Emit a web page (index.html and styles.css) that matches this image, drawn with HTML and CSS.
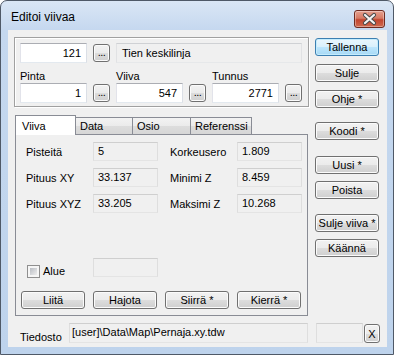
FILE: index.html
```html
<!DOCTYPE html>
<html lang="fi">
<head>
  <meta charset="UTF-8">
  <title>Editoi viivaa</title>
  <link rel="stylesheet" href="styles.css">
</head>
<body>

<div class="window">
  <div class="titlebar">
    <span class="title">Editoi viivaa</span>
    <span class="close">
      <svg width="31" height="18" viewBox="0 0 31 18">
        <path d="M11 5 L20 13 M20 5 L11 13" stroke="#4a4a4a" stroke-width="4.2" stroke-linecap="round"/>
        <path d="M11 5 L20 13 M20 5 L11 13" stroke="#f4f4f4" stroke-width="2.2" stroke-linecap="round"/>
      </svg>
    </span>
  </div>

  <div class="client">
    <div class="upper">
      <div class="main">

        <div class="group">
          <div class="edit num">121</div>
          <div class="btn dots">...</div>
          <div class="edit ro span4">Tien keskilinja</div>

          <div class="cap">Pinta</div>
          <div class="cap col3">Viiva</div>
          <div class="cap col5">Tunnus</div>

          <div class="edit num r3">1</div>
          <div class="btn dots r3">...</div>
          <div class="edit num r3">547</div>
          <div class="btn dots r3">...</div>
          <div class="edit num r3">2771</div>
          <div class="btn dots r3">...</div>
        </div>

        <div class="tabs">
          <div class="tab active">Viiva</div>
          <div class="tab w-data">Data</div>
          <div class="tab w-osio">Osio</div>
          <div class="tab w-ref">Referenssi</div>
        </div>

        <div class="panel">
          <div class="stats">
            <div class="lbl">Pisteitä</div>
            <div class="val">5</div>
            <div class="lbl col4">Korkeusero</div>
            <div class="val">1.809</div>

            <div class="lbl">Pituus XY</div>
            <div class="val">33.137</div>
            <div class="lbl col4">Minimi Z</div>
            <div class="val">8.459</div>

            <div class="lbl">Pituus XYZ</div>
            <div class="val">33.205</div>
            <div class="lbl col4">Maksimi Z</div>
            <div class="val">10.268</div>
          </div>

          <div class="alue">
            <div class="checkrow">
              <span class="check"></span>
              <span class="checklabel">Alue</span>
            </div>
            <div class="val"></div>
          </div>

          <div class="actions">
            <div class="btn act">Liitä</div>
            <div class="btn act">Hajota</div>
            <div class="btn act">Siirrä *</div>
            <div class="btn act">Kierrä *</div>
          </div>
        </div>

      </div>

      <div class="side">
        <div class="btn side-btn default">Tallenna</div>
        <div class="btn side-btn m8">Sulje</div>
        <div class="btn side-btn m8">Ohje *</div>
        <div class="btn side-btn m14">Koodi *</div>
        <div class="btn side-btn m16">Uusi *</div>
        <div class="btn side-btn m7">Poista</div>
        <div class="btn side-btn m15">Sulje viiva *</div>
        <div class="btn side-btn m7">Käännä</div>
      </div>
    </div>

    <div class="filerow">
      <div class="filelabel">Tiedosto</div>
      <div class="val file">[user]\Data\Map\Pernaja.xy.tdw</div>
      <div class="val small"></div>
      <div class="btn xbtn">X</div>
    </div>
  </div>
</div>

</body>
</html>
```

FILE: styles.css
```css
body { margin: 0; background: #fff; font-family: "Liberation Sans", Arial, sans-serif; font-size: 11px; color: #000; }

/* window frame */
.window { width: 394px; height: 355px; box-sizing: border-box; border: 1px solid #4f5967; border-radius: 7px 7px 0 0; background: linear-gradient(#dae6f5, #c5d8ef 29px, #bed3ec); display: flex; flex-direction: column; }
.titlebar { height: 29px; display: flex; align-items: flex-start; flex-shrink: 0; }
.title { font-size: 12px; line-height: 15px; margin: 9px 0 0 10px; }
.close { margin: 9px 8px 0 auto; width: 31px; height: 18px; box-sizing: border-box; border: 1px solid #6e2b20; border-radius: 3px; background: linear-gradient(#e6a08f, #d67a64 45%, #c2452f 55%, #cf6a4f); box-shadow: inset 0 0 0 1px rgba(255,255,255,0.35); display: flex; }
.close svg { margin: -1px; }

.client { margin: 0 6px 0 7px; height: 317px; background: #f0f0f0; display: flex; flex-direction: column; flex-shrink: 0; }
.upper { display: flex; }
.main { margin-left: 6px; width: 296px; }
.side { margin-left: 5px; width: 64px; display: flex; flex-direction: column; }

/* buttons */
.btn { box-sizing: border-box; border: 1px solid #707070; border-radius: 3px; background: linear-gradient(#f2f2f2, #ebebeb 50%, #dddddd 50%, #cfcfcf); box-shadow: inset 0 0 0 1px #fbfbfb; display: flex; align-items: center; justify-content: center; line-height: 13px; white-space: nowrap; }
.side-btn { height: 18px; }
.default { margin-top: 8px; border-color: #3c7fb1; background: linear-gradient(#eaf6fd, #d9f0fc 50%, #bee6fd 50%, #a7d9f5); box-shadow: inset 0 0 0 1px #c4ecfd; }
.m7 { margin-top: 7px; }
.m8 { margin-top: 8px; }
.m14 { margin-top: 14px; }
.m15 { margin-top: 15px; }
.m16 { margin-top: 16px; }
.dots { width: 17px; height: 18px; align-self: center; align-items: flex-end; padding-bottom: 2px; letter-spacing: -0.5px; }

/* edits */
.edit { box-sizing: border-box; height: 20px; border: 1px solid; border-color: #abadb3 #dbdfe6 #e3e9ef #e2e3ea; background: #fff; line-height: 13px; padding: 3px 5px 0 5px; }
.num { text-align: right; }
.ro { background: #f0f0f0; border-color: #cfd1d4 #e1e2e4 #e6e8ea #e1e2e4; }
.val { box-sizing: border-box; height: 19px; border: 1px solid; border-color: #cfcfcf #dedede #e4e4e4 #dedede; background: #f0f0f0; line-height: 13px; padding: 2px 4px 0 4px; white-space: nowrap; }

/* top group */
.group { box-sizing: border-box; width: 295px; height: 70px; margin: 7px 0 8px; border: 1px solid #a0a0a0; box-shadow: inset 1px 1px 0 #fff, 1px 1px 0 #fff; padding: 5px 0 0 5px; display: grid; grid-template-columns: 67px 17px 67px 17px 67px 17px; grid-template-rows: 20px 20px 20px; column-gap: 6px; }
.span4 { grid-column: 3 / 7; padding-left: 5px; }
.cap { grid-row: 2; grid-column: 1; align-self: end; line-height: 13px; }
.cap.col3 { grid-column: 3; }
.cap.col5 { grid-column: 5; }
.r3 { grid-row: 3; }

/* tabs */
.tabs { display: flex; align-items: flex-end; height: 19px; margin-left: 1px; }
.tab { box-sizing: border-box; height: 17px; border: 1px solid #898c95; border-bottom: none; background: linear-gradient(#f3f3f3, #ebebeb 50%, #dddddd 50%, #d6d6d6); line-height: 13px; padding: 2px 0 0 4px; margin-left: -1px; }
.tab.active { position: relative; z-index: 1; width: 61px; height: 20px; margin: 0 0 -1px 0; background: #fff; padding: 4px 0 0 6px; }
.w-data { width: 58px; }
.w-osio { width: 59px; }
.w-ref { width: 62px; }

.panel { box-sizing: border-box; width: 293px; height: 182px; margin-left: 1px; border: 1px solid #898c95; background: #f0f0f0; padding: 7px 0 0 5px; }
.stats { margin-left: 5px; display: grid; grid-template-columns: 67px 65px 67px 65px; grid-auto-rows: 19px; row-gap: 7px; }
.lbl { padding-top: 4px; line-height: 13px; white-space: nowrap; }
.lbl.col4 { margin-left: 12px; margin-right: -12px; }
.stats .col4 + .val { margin-left: 12px; margin-right: -12px; }

.alue { margin: 45px 0 0 5px; display: grid; grid-template-columns: 67px 65px; height: 19px; }
.checkrow { display: flex; align-items: center; margin-top: 7px; height: 13px; margin-left: 1px; }
.check { width: 13px; height: 13px; box-sizing: border-box; border: 1px solid #8f8f8f; padding: 2px; background: linear-gradient(135deg, #b9bdc3, #eeeeee) content-box, #f6f6f6; }
.checklabel { margin-left: 3px; line-height: 13px; }

.actions { margin-top: 14px; display: flex; gap: 8px; }
.act { width: 64px; height: 18px; }

/* file row */
.filerow { display: flex; margin: 7px 0 0 12px; height: 20px; }
.filelabel { width: 49px; align-self: flex-end; line-height: 13px; margin-bottom: -1px; }
.file { width: 239px; height: 20px; padding-left: 2px; }
.small { width: 47px; height: 20px; margin-left: 8px; }
.xbtn { width: 16px; height: 19px; margin: 1px 0 0 1px; padding-top: 1px; }
```
